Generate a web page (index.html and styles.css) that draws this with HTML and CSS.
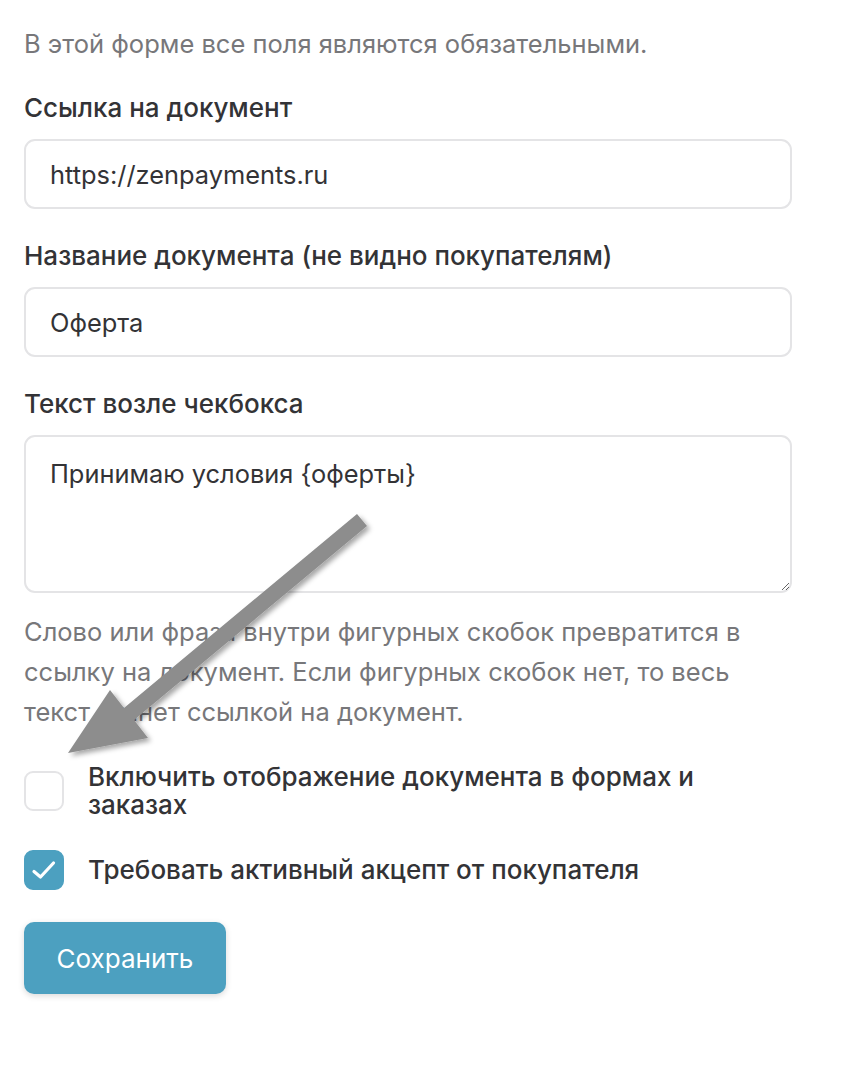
FILE: index.html
```html
<!DOCTYPE html>
<html lang="ru">
<head>
<meta charset="utf-8">
<link rel="stylesheet" href="styles.css">
</head>
<body>
<div class="page">
  <p class="intro">В этой форме все поля являются обязательными.</p>
  <div class="field">
    <label class="label">Ссылка на документ</label>
    <input class="input" type="text" value="https://zenpayments.ru">
  </div>
  <div class="field">
    <label class="label">Название документа (не видно покупателям)</label>
    <input class="input" type="text" value="Оферта">
  </div>
  <div class="field">
    <label class="label">Текст возле чекбокса</label>
    <textarea class="textarea">Принимаю условия {оферты}</textarea>
  </div>
  <p class="help">Слово или фраза внутри фигурных скобок превратится в ссылку на документ. Если фигурных скобок нет, то весь текст станет ссылкой на документ.</p>
  <div class="check-row first">
    <span class="box"></span>
    <span class="check-label">Включить отображение документа в формах и<br>заказах</span>
  </div>
  <div class="check-row second">
    <span class="box checked">
      <svg class="tick" width="36" height="36" viewBox="0 0 36 36"><path d="M8 19.5 L14.5 25 L27.5 11" fill="none" stroke="#fff" stroke-width="3.2" stroke-linecap="round" stroke-linejoin="round"/></svg>
    </span>
    <span class="check-label">Требовать активный акцепт от покупателя</span>
  </div>
  <button class="btn" type="button">Сохранить</button>
  <svg class="arrow" width="868" height="1076" viewBox="0 0 868 1076">
    <defs>
      <filter id="sh" x="-20%" y="-20%" width="140%" height="140%">
        <feDropShadow dx="3" dy="3" stdDeviation="2.5" flood-color="#000" flood-opacity="0.35"/>
      </filter>
    </defs>
    <polygon points="357,514 367,526 134,720 148,738 68,753 110,690 124,708" fill="#8d8d8d" filter="url(#sh)"/>
  </svg>
</div>
</body>
</html>
```
FILE: styles.css
```css
* { box-sizing: border-box; }
html, body { margin: 0; padding: 0; background: #fff; }
body {
  font-family: Inter, "Noto Sans", "Liberation Sans", sans-serif;
  color: #333336;
}
.page {
  position: relative;
  width: 868px;
  height: 1076px;
  padding: 28px 76px 0 24px;
}
.intro {
  margin: 0;
  font-size: 25.5px;
  line-height: 32px;
  color: #77777a;
}
.field {
  display: flex;
  flex-direction: column;
  margin-top: 32px;
}
.field + .field { margin-top: 31px; }
.label {
  font-size: 26px;
  line-height: 32px;
  font-weight: 500;
  color: #333336;
  margin-bottom: 15px;
}
.input, .textarea {
  width: 768px;
  border: 2px solid #e4e4e6;
  border-radius: 11px;
  font-family: inherit;
  font-size: 25.4px;
  color: #333336;
  padding: 0 24px;
  outline: none;
  background: #fff;
}
.input { height: 70px; }
.textarea {
  height: 158px;
  padding-top: 21px;
  line-height: 32px;
  resize: vertical;
}
.help {
  margin: 19px 0 0;
  font-size: 25.5px;
  line-height: 40px;
  color: #77777a;
  width: 768px;
}
.check-row {
  display: flex;
  align-items: center;
  gap: 24px;
}
.check-row.first { margin-top: 31px; }
.check-row.second { margin-top: 31px; }
.box {
  flex: 0 0 auto;
  width: 40px;
  height: 40px;
  border: 2px solid #e4e4e6;
  border-radius: 9px;
  display: flex;
  align-items: center;
  justify-content: center;
  background: #fff;
}
.box.checked {
  background: #4ca0c0;
  border-color: #4ca0c0;
}
.tick { display: block; flex: 0 0 auto; }
.check-label {
  font-size: 26px;
  line-height: 28px;
  font-weight: 500;
  color: #333336;
}
.btn {
  display: block;
  margin-top: 32px;
  width: 202px;
  height: 72px;
  border: none;
  border-radius: 10px;
  background: #4ca0c0;
  color: #fff;
  font-family: inherit;
  font-size: 26px;
  box-shadow: 0 2px 6px rgba(0,0,0,0.15);
}
.arrow {
  position: absolute;
  left: 0;
  top: 0;
  pointer-events: none;
}
```
